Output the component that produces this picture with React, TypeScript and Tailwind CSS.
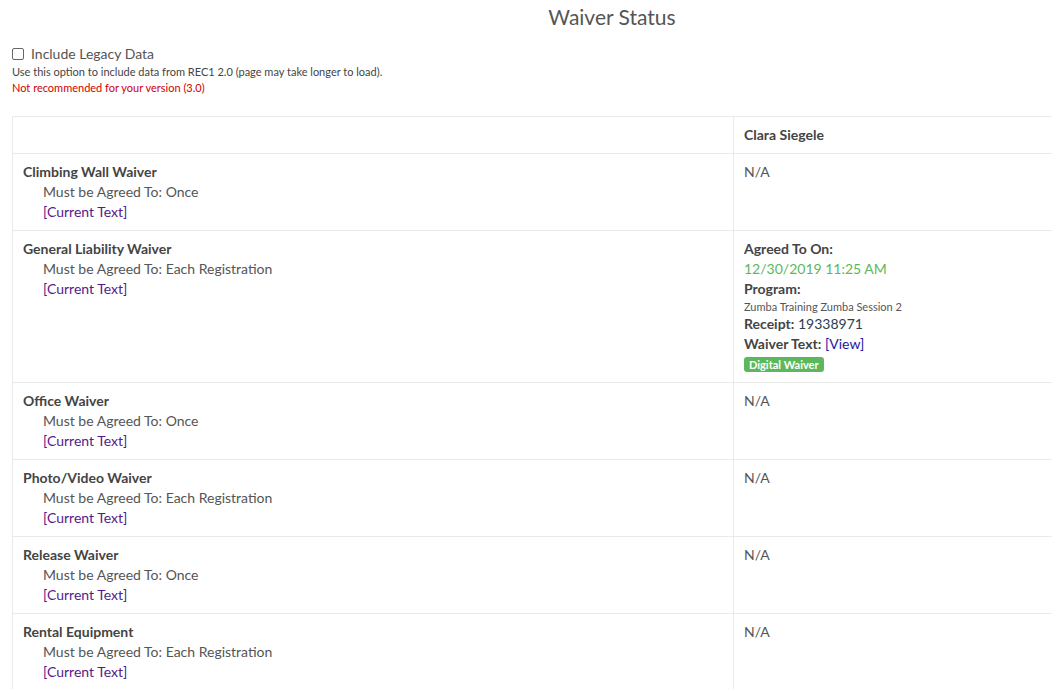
import React from "react";

const rows = [
  { name: "Climbing Wall Waiver", freq: "Once", agreed: false },
  { name: "General Liability Waiver", freq: "Each Registration", agreed: true },
  { name: "Office Waiver", freq: "Once", agreed: false },
  { name: "Photo/Video Waiver", freq: "Each Registration", agreed: false },
  { name: "Release Waiver", freq: "Once", agreed: false },
  { name: "Rental Equipment", freq: "Each Registration", agreed: false },
];

export default function App() {
  return (
    <div className="w-full overflow-hidden bg-white text-[#555]" style={{ fontFamily: "Lato, 'Noto Sans', sans-serif" }}>
      <div className="w-[1224px] px-[12px]">
        <h1 className="text-center text-[21px] leading-[33px] text-[#555] font-normal">Waiver Status</h1>
        <div className="mt-[11px] flex items-center h-[20px]">
          <span className="w-[12px] h-[12px] border border-[#666] rounded-[2px] bg-white" />
          <span className="ml-[7px] text-[14px] leading-[20px]">Include Legacy Data</span>
        </div>
        <div className="text-[11px] leading-[16px] text-[#444]">Use this option to include data from REC1 2.0 (page may take longer to load).</div>
        <div className="text-[11px] leading-[16px] text-[#d00000]">Not recommended for your version (3.0)</div>
        <table className="mt-[20px] w-full border-collapse text-[14px] leading-[20px]">
          <tbody>
            <tr>
              <td className="border border-[#eaeaea] w-[721px] px-[10px] py-[8px]">&nbsp;</td>
              <td className="border border-[#eaeaea] px-[10px] py-[8px] font-bold text-[#444]">Clara Siegele</td>
            </tr>
            {rows.map((r) => (
              <tr key={r.name}>
                <td className="border border-[#eaeaea] px-[10px] py-[8px] align-top">
                  <div className="font-bold text-[#444]">{r.name}</div>
                  <div className="pl-[20px]">Must be Agreed To: {r.freq}</div>
                  <div className="pl-[20px] text-[#551a8b]">[Current Text]</div>
                </td>
                <td className="border border-[#eaeaea] px-[10px] py-[8px] align-top">
                  {r.agreed ? (
                    <div>
                      <div className="font-bold text-[#444]">Agreed To On:</div>
                      <div className="text-[#5cb85c]">12/30/2019 11:25 AM</div>
                      <div className="font-bold text-[#444]">Program:</div>
                      <div className="text-[11px] leading-[15px] text-[#555]">Zumba Training Zumba Session 2</div>
                      <div>
                        <span className="font-bold text-[#444]">Receipt:</span>{" "}
                        <span className="text-[#2c3e50]">19338971</span>
                      </div>
                      <div>
                        <span className="font-bold text-[#444]">Waiver Text:</span>{" "}
                        <span className="text-[#1a1aa6]">[View]</span>
                      </div>
                      <div className="mt-[3px] inline-block rounded-[3px] bg-[#5cb85c] px-[5px] text-[11px] leading-[15px] font-bold text-white align-top">
                        Digital Waiver
                      </div>
                    </div>
                  ) : (
                    <div>N/A</div>
                  )}
                  {!r.agreed && <div className="h-[40px]" />}
                </td>
              </tr>
            ))}
          </tbody>
        </table>
      </div>
    </div>
  );
}
